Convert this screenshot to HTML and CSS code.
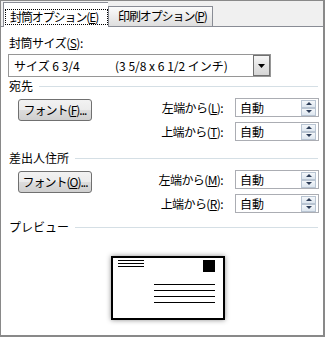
FILE: index.html
```html
<!DOCTYPE html>
<html lang="ja">
<head>
    <meta charset="UTF-8">
    <title>封筒オプション</title>
    <link rel="stylesheet" href="styles.css">
</head>
<body>
    <div class="frame">
        <div class="tabs">
            <div class="tab active"><span class="focus">封筒オプション(<u>E</u>)</span></div>
            <div class="tab">印刷オプション(<u>P</u>)</div>
        </div>
        <div class="panel">
            <div class="field-label">封筒サイズ(<u>S</u>):</div>
            <div class="combo">
                <span class="combo-text"><span class="size-name">サイズ 6 3/4</span><span>(3 5/8 x 6 1/2 インチ)</span></span>
                <span class="combo-btn">
                    <svg width="7" height="4" viewBox="0 0 7 4"><path d="M0 0H7L3.5 4Z" fill="#000"/></svg>
                </span>
            </div>

            <!-- 宛先 -->
            <div class="group-head"><span>宛先</span><span class="rule"></span></div>
            <div class="group">
                <button class="btn">フォント(<u>F</u>)...</button>
                <div class="offsets">
                    <div class="offset-row">
                        <label>左端から(<u>L</u>):</label>
                        <div class="spin"><span>自動</span><span class="spin-btns"><span class="up"></span><span class="down"></span></span></div>
                    </div>
                    <div class="offset-row">
                        <label>上端から(<u>T</u>):</label>
                        <div class="spin"><span>自動</span><span class="spin-btns"><span class="up"></span><span class="down"></span></span></div>
                    </div>
                </div>
            </div>

            <!-- 差出人住所 -->
            <div class="group-head second"><span>差出人住所</span><span class="rule"></span></div>
            <div class="group">
                <button class="btn">フォント(<u>O</u>)...</button>
                <div class="offsets">
                    <div class="offset-row">
                        <label>左端から(<u>M</u>):</label>
                        <div class="spin"><span>自動</span><span class="spin-btns"><span class="up"></span><span class="down"></span></span></div>
                    </div>
                    <div class="offset-row">
                        <label>上端から(<u>R</u>):</label>
                        <div class="spin"><span>自動</span><span class="spin-btns"><span class="up"></span><span class="down"></span></span></div>
                    </div>
                </div>
            </div>

            <!-- プレビュー -->
            <div class="group-head third"><span>プレビュー</span><span class="rule"></span></div>
            <div class="preview">
                <div class="envelope">
                    <svg width="110" height="60" viewBox="0 0 110 60">
                        <g fill="#000">
                            <rect x="5" y="2" width="26" height="1"/>
                            <rect x="5" y="5" width="26" height="1"/>
                            <rect x="5" y="8" width="26" height="1"/>
                            <rect x="90" y="2" width="12" height="12"/>
                            <rect x="41" y="26" width="61" height="1"/>
                            <rect x="41" y="32" width="61" height="1"/>
                            <rect x="41" y="38" width="61" height="1"/>
                            <rect x="41" y="44" width="61" height="1"/>
                        </g>
                    </svg>
                </div>
            </div>
        </div>
    </div>
</body>
</html>
```

FILE: styles.css
```css
body {
    margin: 0;
    font-family: "Noto Sans CJK JP", sans-serif;
    font-size: 12px;
    line-height: 16px;
    color: #000;
    white-space: nowrap;
}
u {
    text-decoration-thickness: 1px;
    text-underline-offset: 1px;
}
.frame {
    width: 325px;
    height: 337px;
    box-sizing: border-box;
    border: 1px solid #898989;
    border-right-width: 2px;
    border-bottom-width: 2px;
    background-color: #f0f0f0;
    display: flex;
    flex-direction: column;
}
.tabs {
    height: 25px;
    display: flex;
    align-items: flex-end;
    padding-left: 2px;
    flex-shrink: 0;
}
.tab {
    box-sizing: border-box;
    height: 20px;
    width: 105px;
    border: 1px solid #898c95;
    border-bottom: none;
    padding: 1px 0 0 9px;
    letter-spacing: -1.1px;
    background: linear-gradient(#fbfbfb, #ececec 50%, #dedede);
}
.tab.active {
    position: relative;
    z-index: 1;
    height: 25px;
    margin-bottom: -1px;
    padding: 6px 0 0 0;
    background: #fff;
    border-right: none;
}
.focus {
    display: block;
    height: 16px;
    box-sizing: border-box;
    border: 1px dotted #000;
    margin: 0 0 0 1px;
    padding-left: 4px;
    line-height: 14px;
}
.panel {
    flex: 1;
    background-color: #fff;
    border-top: 1px solid #898c95;
    padding: 0 4px 0 7px;
    display: flex;
    flex-direction: column;
}
.field-label {
    margin-top: 8px;
    padding-left: 1px;
    letter-spacing: -0.5px;
}
.combo {
    margin-top: 3px;
    width: 263px;
    height: 23px;
    box-sizing: border-box;
    border: 1px solid #969696;
    display: flex;
    align-items: center;
}
.combo-text {
    flex: 1;
    display: flex;
    padding-left: 5px;
}
.size-name {
    width: 101px;
}
.combo-btn {
    width: 17px;
    height: 21px;
    box-sizing: border-box;
    border: 1px solid #707070;
    background: linear-gradient(#f6f6f6, #e4e4e4 50%, #d6d6d6);
    display: flex;
    align-items: center;
    justify-content: center;
}
.group-head {
    margin-top: 1px;
    padding-left: 1px;
    display: flex;
    align-items: center;
}
.group-head.second {
    margin-top: 9px;
}
.group-head.third {
    margin-top: 6px;
}
.rule {
    flex: 1;
    height: 1px;
    margin: 0 1px 0 6px;
    background-color: #d5dfe5;
}
.group {
    margin-top: 4px;
    display: flex;
    justify-content: space-between;
    padding-left: 10px;
}
.btn {
    margin-top: 1px;
    width: 74px;
    height: 22px;
    padding: 0;
    font: inherit;
    letter-spacing: -1px;
    color: #000;
    border: 1px solid #707070;
    border-radius: 3px;
    background: linear-gradient(#f2f2f2, #ebebeb 50%, #dddddd 51%, #cfcfcf);
}
.offsets {
    display: flex;
    flex-direction: column;
    gap: 5px;
}
.offset-row {
    display: flex;
    align-items: center;
    justify-content: flex-end;
}
.offset-row label {
    margin-right: 12px;
    letter-spacing: -0.6px;
}
.spin {
    width: 84px;
    height: 19px;
    box-sizing: border-box;
    border: 1px solid #abadb3;
    display: flex;
    align-items: center;
    justify-content: space-between;
    padding-left: 4px;
}
.spin-btns {
    display: flex;
    flex-direction: column;
    margin-right: 2px;
}
.spin-btns span {
    width: 15px;
    height: 8px;
    box-sizing: border-box;
    border: 1px solid #b8c4d2;
    background: linear-gradient(#f4f7fa, #dde6ef);
    display: flex;
    align-items: center;
    justify-content: center;
}
.spin-btns .up::after {
    content: "";
    border-left: 3px solid transparent;
    border-right: 3px solid transparent;
    border-bottom: 3px solid #2c3d58;
}
.spin-btns .down::after {
    content: "";
    border-left: 3px solid transparent;
    border-right: 3px solid transparent;
    border-top: 3px solid #2c3d58;
}
.preview {
    margin-top: 21px;
    padding-left: 103px;
}
.envelope {
    width: 110px;
    height: 60px;
    border: 2px solid #000;
    box-shadow: 0 0 5px rgba(0, 0, 0, 0.45);
}
.envelope svg {
    display: block;
}
```
